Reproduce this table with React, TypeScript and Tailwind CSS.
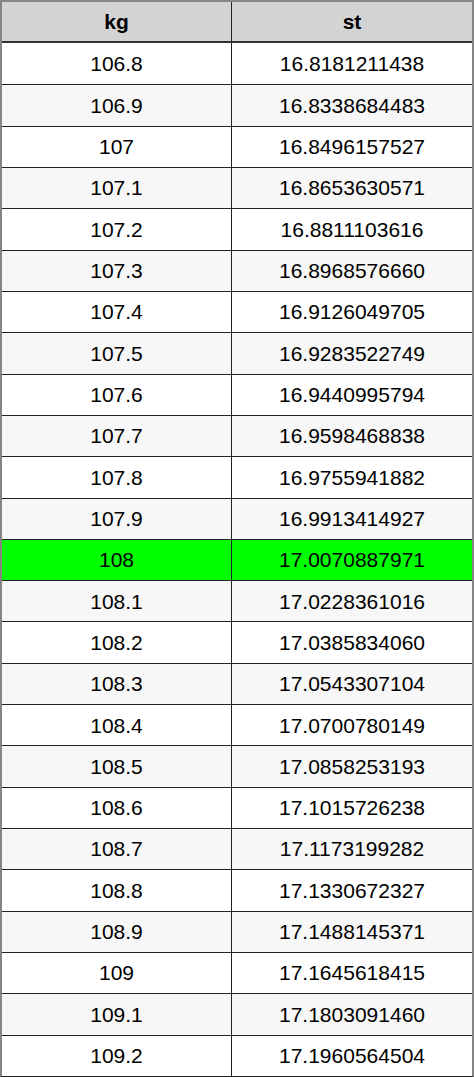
const ROWS: [string, string][] = [
  ["106.8", "16.8181211438"],
  ["106.9", "16.8338684483"],
  ["107", "16.8496157527"],
  ["107.1", "16.8653630571"],
  ["107.2", "16.8811103616"],
  ["107.3", "16.8968576660"],
  ["107.4", "16.9126049705"],
  ["107.5", "16.9283522749"],
  ["107.6", "16.9440995794"],
  ["107.7", "16.9598468838"],
  ["107.8", "16.9755941882"],
  ["107.9", "16.9913414927"],
  ["108", "17.0070887971"],
  ["108.1", "17.0228361016"],
  ["108.2", "17.0385834060"],
  ["108.3", "17.0543307104"],
  ["108.4", "17.0700780149"],
  ["108.5", "17.0858253193"],
  ["108.6", "17.1015726238"],
  ["108.7", "17.1173199282"],
  ["108.8", "17.1330672327"],
  ["108.9", "17.1488145371"],
  ["109", "17.1645618415"],
  ["109.1", "17.1803091460"],
  ["109.2", "17.1960564504"],
];

export default function App() {
  return (
    <div className="w-[474px] h-[1077px] bg-white font-['Liberation_Sans',Arial,sans-serif] text-[21px] text-black">
      <div className="grid h-full grid-cols-[230px_1fr] grid-rows-[41px_repeat(25,1fr)] border-x-2 border-t-2 border-b border-x-[#858585] border-t-[#858585] border-b-[#222]">
        <div className="flex items-center justify-center bg-[#d3d3d3] border-r border-[#222] border-b-2 border-b-[#333] font-bold">
          kg
        </div>
        <div className="flex items-center justify-center bg-[#d3d3d3] border-b-2 border-b-[#333] font-bold">
          st
        </div>
        {ROWS.map(([kg, st], i) => {
          const hit = kg === "108";
          const bg = hit ? "bg-[#00ff00]" : i % 2 === 1 ? "bg-[#f7f7f7]" : "bg-white";
          const line = i === 0 ? "" : "border-t border-[#222]";
          return (
            <div key={kg} className="contents">
              <div className={`flex items-center justify-center border-r border-r-[#222] ${line} ${bg}`}>
                {kg}
              </div>
              <div className={`flex items-center justify-center ${line} ${bg}`}>{st}</div>
            </div>
          );
        })}
      </div>
    </div>
  );
}
